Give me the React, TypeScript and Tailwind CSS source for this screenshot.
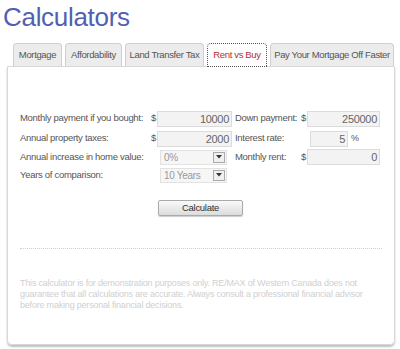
import React from "react";

const font = { fontFamily: '"Liberation Sans", Arial, sans-serif' };

function Tab({ label, active, w }: { label: string; active?: boolean; w: string }) {
  return (
    <div
      className={
        "flex items-center justify-center whitespace-nowrap rounded-t-[4px] text-[9.5px] tracking-[-0.35px] " +
        w +
        (active
          ? " h-[24px] border border-dotted border-[#555] bg-white text-[#b03030] relative z-10 -mb-[1px]"
          : " h-[23px] border border-[#cfcfcf] border-b-0 bg-[#ececec] text-[#555]")
      }
    >
      {label}
    </div>
  );
}

function Input({ value, w = "w-[75px]" }: { value: string; w?: string }) {
  return (
    <div className={"h-[16px] border border-[#dcdcdc] bg-[#f3f3f3] text-right pr-[2px] text-[11px] leading-[14px] text-[#666] " + w}>
      {value}
    </div>
  );
}

function Select({ value }: { value: string }) {
  return (
    <div className="h-[15px] w-[67px] border border-[#e2e2e2] bg-[#f6f6f6] flex items-center justify-between pl-[3px] pr-[1px] text-[10px] text-[#999]">
      <span>{value}</span>
      <span className="w-[12px] h-[11px] border border-[#aaa] bg-[#f0f0f0] flex items-center justify-center">
        <svg width="6" height="4" viewBox="0 0 6 4"><path d="M0 0h6L3 3.5z" fill="#333" /></svg>
      </span>
    </div>
  );
}

export default function App() {
  return (
    <div className="w-[400px] h-[349px] bg-white overflow-hidden" style={font}>
      <div className="pl-[3px] h-[43px] text-[26px] leading-[34px] text-[#5060b4] tracking-[-0.3px]">
        Calculators
      </div>
      <div className="flex gap-[3px] pl-[13px] items-end h-[23px]">
        <Tab label="Mortgage" w="w-[49px]" />
        <Tab label="Affordability" w="w-[57px]" />
        <Tab label="Land Transfer Tax" w="w-[79px]" />
        <Tab label="Rent vs Buy" active w="w-[60px]" />
        <Tab label="Pay Your Mortgage Off Faster" w="w-[124px]" />
      </div>
      <div className="ml-[7px] w-[388px] h-[279px] border border-[#d8d8d8] rounded-b-[5px] shadow-[0_2px_2px_rgba(0,0,0,0.25)] text-[9.5px] tracking-[-0.3px] text-[#555] pt-[41px] px-[12px] whitespace-nowrap">
        <div className="grid grid-cols-[131px_6px_75px_69px_6px_75px] grid-rows-[21px_19px_18px_18px] items-center">
          <div>Monthly payment if you bought:</div>
          <div>$</div>
          <Input value="10000" />
          <div className="pl-[3px]">Down payment:</div>
          <div>$</div>
          <Input value="250000" w="w-[73px]" />

          <div>Annual property taxes:</div>
          <div>$</div>
          <Input value="2000" />
          <div className="pl-[3px]">Interest rate:</div>
          <div></div>
          <div className="flex items-center gap-[3px] pl-[3px]">
            <Input value="5" w="w-[38px]" />
            <span className="text-[9px]">%</span>
          </div>

          <div>Annual increase in home value:</div>
          <div></div>
          <div className="pl-[3px]"><Select value="0%" /></div>
          <div className="pl-[3px]">Monthly rent:</div>
          <div>$</div>
          <Input value="0" w="w-[73px]" />

          <div>Years of comparison:</div>
          <div></div>
          <div className="pl-[3px]"><Select value="10 Years" /></div>
          <div></div>
          <div></div>
          <div></div>
        </div>
        <div className="flex pl-[138px] mt-[16px]">
          <button className="w-[85px] h-[16px] rounded-[2px] border border-[#aaa] bg-gradient-to-b from-[#fafafa] to-[#dcdcdc] text-[9.5px] leading-[14px] text-[#333] shadow-[0_1px_1px_rgba(0,0,0,0.2)]">
            Calculate
          </button>
        </div>
        <div className="mt-[32px] border-t border-dotted border-[#cfcfcf]" />
        <div className="mt-[29px] text-[9px] tracking-[-0.2px] leading-[11px] text-[#d0d0d0]">
          This calculator is for demonstration purposes only. RE/MAX of Western Canada does not
          <br />
          guarantee that all calculations are accurate. Always consult a professional financial advisor
          <br />
          before making personal financial decisions.
        </div>
      </div>
    </div>
  );
}
